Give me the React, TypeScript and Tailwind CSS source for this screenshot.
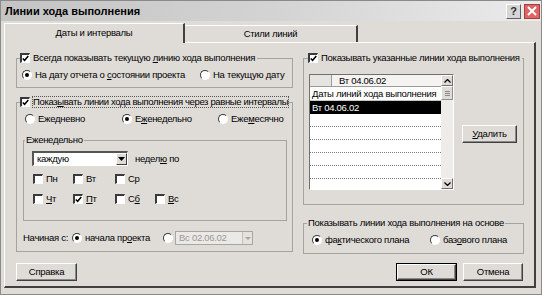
import React from "react";

const Check = ({ checked = false }: { checked?: boolean }) => (
  <span className="flex h-[10px] w-[10px] shrink-0 items-center justify-center border-t-2 border-l-2 border-r border-b border-t-[#3a3a3a] border-l-[#3a3a3a] border-r-white border-b-white bg-white">
    {checked && (
      <svg width="7" height="7" viewBox="0 0 7 7">
        <path d="M0.8 3.4 L2.6 5.3 L6.3 1" stroke="#000" strokeWidth="1.5" fill="none" />
      </svg>
    )}
  </span>
);

const Radio = ({ on = false }: { on?: boolean }) => (
  <span className="flex h-[10px] w-[10px] shrink-0 items-center justify-center rounded-full border-[1.5px] border-t-[#3a3a3a] border-l-[#3a3a3a] border-r-white border-b-white bg-white">
    {on && <span className="h-[4px] w-[4px] rounded-full bg-black" />}
  </span>
);

const Btn = ({ children, w, def = false }: { children: React.ReactNode; w: string; def?: boolean }) => (
  <div className={`${w} h-[18px] ${def ? "border border-black" : ""}`}>
    <div className="flex h-full w-full items-center justify-center border border-t-white border-l-white border-r-[#404040] border-b-[#404040] shadow-[inset_-1px_-1px_0_#8a8a8a]">
      {children}
    </div>
  </div>
);

const Arrow = ({ up = false }: { up?: boolean }) => (
  <svg width="7" height="4" viewBox="0 0 7 4">
    <path d={up ? "M0.5 3.5 L3.5 0.5 L6.5 3.5" : "M0.5 0.5 L3.5 3.5 L6.5 0.5"} stroke="#000" strokeWidth="1.3" fill="none" />
  </svg>
);

export default function App() {
  return (
    <div className="h-[295px] w-[542px] overflow-hidden whitespace-nowrap border border-[#8a8a8a] bg-[#dfdcd8] font-['Liberation_Sans',Arial,sans-serif] text-[9.5px] leading-none tracking-[-0.28px] text-black">
      {/* title bar */}
      <div className="flex h-[20px] items-center bg-gradient-to-r from-[#c4c4c4] via-[#d3d3d3] to-[#ebebeb] pl-[4px] pr-[1px]">
        <span className="text-[11px] font-bold tracking-[0px]">Линии хода выполнения</span>
        <div className="ml-auto flex gap-[3px]">
          <div className="flex h-[15px] w-[15px] items-center justify-center border border-t-white border-l-white border-r-[#606060] border-b-[#606060] bg-[#d6d6d6] text-[11px] font-bold tracking-[0px] text-[#303030]">
            ?
          </div>
          <div className="flex h-[15px] w-[16px] items-center justify-center border border-[#a04040] bg-[#e06464]">
            <svg width="10" height="10" viewBox="0 0 10 10">
              <path d="M1 1 L9 9 M9 1 L1 9" stroke="#fff" strokeWidth="2" />
            </svg>
          </div>
        </div>
      </div>

      <div className="pl-[3px] pr-[5px]">
        {/* tabs */}
        <div className="flex h-[21px] items-end">
          <div className="relative -mb-px flex h-[20px] w-[181px] items-center justify-center border-l border-t border-r-2 border-l-white border-t-white border-r-[#404040] bg-[#dfdcd8] pb-[2px]">
            Даты и интервалы
          </div>
          <div className="flex h-[17px] w-[173px] items-center justify-center border-t border-r-2 border-t-white border-r-[#404040]">
            Стили линий
          </div>
        </div>

        {/* panel */}
        <div className="flex h-[246px] flex-col border-l border-t border-r-2 border-b-2 border-l-white border-t-white border-r-[#404040] border-b-[#404040]">
          <div className="flex pl-[11px] pt-[9px]">
            {/* left column */}
            <div className="w-[277px]">
              <fieldset className="border border-[#a5a3a0] p-0 pb-[6px]">
                <legend className="ml-[3px]">
                  <span className="flex h-[12px] items-center gap-[3px] pr-[2px]">
                    <Check checked />
                    <span>Всегда показывать текущую <u>л</u>инию хода выполнения</span>
                  </span>
                </legend>
                <div className="mt-[5px] flex h-[12px] items-center pl-[5px]">
                  <div className="flex w-[178px] items-center gap-[3px]">
                    <Radio on />
                    <span>На дату отчета о <u>с</u>остоянии проекта</span>
                  </div>
                  <div className="flex items-center gap-[3px]">
                    <Radio />
                    <span>На текущую дату</span>
                  </div>
                </div>
              </fieldset>

              <fieldset className="mt-[8px] border border-[#a5a3a0] p-0 pb-[6px]">
                <legend className="ml-[3px]">
                  <span className="flex h-[12px] items-center gap-[3px]">
                    <Check checked />
                    <span className="tracking-[-0.36px] outline-1 outline-dotted outline-[#555]">Показ<u>ы</u>вать линии хода выполнения через равные интервалы</span>
                  </span>
                </legend>
                <div className="mt-[5px] flex h-[12px] items-center pl-[8px]">
                  <div className="flex w-[97px] items-center gap-[3px]">
                    <Radio />
                    <span>Еже<u>д</u>невно</span>
                  </div>
                  <div className="flex w-[96px] items-center gap-[3px]">
                    <Radio on />
                    <span>Е<u>ж</u>енедельно</span>
                  </div>
                  <div className="flex items-center gap-[3px]">
                    <Radio />
                    <span>Еже<u>м</u>есячно</span>
                  </div>
                </div>

                <fieldset className="ml-[6px] mr-[5px] mt-[9px] border border-[#a5a3a0] p-0 pb-[15px]">
                  <legend className="ml-[1px] flex h-[12px] items-center px-[1px]">Еженедельно</legend>
                  <div className="ml-[8px] mt-[5px] flex items-center gap-[7px]">
                    <div className="flex h-[15px] w-[96px] border-t-2 border-l-2 border-r border-b border-t-[#555] border-l-[#555] border-r-white border-b-white bg-white">
                      <span className="flex flex-1 items-center pl-[3px]">каждую</span>
                      <span className="flex w-[11px] items-center justify-center border border-t-white border-l-white border-r-[#404040] border-b-[#404040] bg-[#dfdcd8]">
                        <svg width="7" height="4" viewBox="0 0 7 4"><path d="M0 0 H7 L3.5 4 Z" fill="#000" /></svg>
                      </span>
                    </div>
                    <span>недел<u>ю</u> по</span>
                  </div>
                  <div className="ml-[9px] mt-[7px] flex h-[12px] items-center">
                    <div className="flex w-[40px] items-center gap-[3px]"><Check /><span>Пн</span></div>
                    <div className="flex w-[42px] items-center gap-[3px]"><Check /><span>Вт</span></div>
                    <div className="flex items-center gap-[3px]"><Check /><span>Ср</span></div>
                  </div>
                  <div className="ml-[9px] mt-[8px] flex h-[12px] items-center">
                    <div className="flex w-[40px] items-center gap-[3px]"><Check /><span><u>Ч</u>т</span></div>
                    <div className="flex w-[42px] items-center gap-[3px]"><Check checked /><span><u>П</u>т</span></div>
                    <div className="flex w-[40px] items-center gap-[3px]"><Check /><span>С<u>б</u></span></div>
                    <div className="flex items-center gap-[3px]"><Check /><span><u>В</u>с</span></div>
                  </div>
                </fieldset>

                <div className="ml-[6px] mt-[10px] flex h-[14px] items-center">
                  <span className="w-[49px]">Начиная с:</span>
                  <div className="flex w-[91px] items-center gap-[3px]">
                    <Radio on />
                    <span>начала пр<u>о</u>екта</span>
                  </div>
                  <Radio />
                  <div className="ml-[2px] flex h-[14px] w-[78px] border border-[#a8a6a3] bg-[#ebe9e6]">
                    <span className="flex flex-1 items-center pl-[3px] text-[#9a9896]">Вс 02.06.02</span>
                    <span className="flex w-[10px] items-center justify-center border-l border-[#c4c2bf] bg-[#e4e2df]">
                      <svg width="6" height="3" viewBox="0 0 6 3"><path d="M0 0 H6 L3 3 Z" fill="#a8a6a3" /></svg>
                    </span>
                  </div>
                </div>
              </fieldset>
            </div>

            {/* right column */}
            <div className="ml-[10px] w-[221px]">
              <fieldset className="border border-[#a5a3a0] p-0 pb-[14px]">
                <legend className="ml-[4px]">
                  <span className="flex h-[12px] items-center gap-[3px] pr-[2px]">
                    <Check checked />
                    <span>Показывать указанные линии хода выполнения</span>
                  </span>
                </legend>
                <div className="ml-[5px] mt-[10px] flex items-start">
                  <div className="flex h-[116px] w-[145px] overflow-hidden border border-t-[#707070] border-l-[#707070] border-r-white border-b-white bg-white">
                    <div className="flex flex-1 flex-col">
                      <div className="flex h-[12px] shrink-0 border-b border-[#9c9a98] bg-[#f4f3f1]">
                        <div className="w-[22px] border-r border-[#9c9a98] bg-[#e6e4e1]" />
                        <div className="flex items-center pl-[7px]">Вт 04.06.02</div>
                      </div>
                      <div className="flex h-[14px] shrink-0 items-center border-b border-[#c8c6c4] pl-[2px]">Даты линий хода выполнения</div>
                      <div className="flex h-[13px] shrink-0 items-center bg-black pl-[2px] text-white">Вт 04.06.02</div>
                      {[0, 1, 2, 3, 4, 5].map((i) => (
                        <div key={i} className="h-[13px] shrink-0 border-b border-dotted border-[#7a7a7a]" />
                      ))}
                    </div>
                    <div className="flex w-[12px] flex-col bg-[#eeece9]">
                      <div className="flex h-[11px] items-center justify-center border border-t-white border-l-white border-r-[#707070] border-b-[#707070] bg-[#dfdcd8]">
                        <Arrow up />
                      </div>
                      <div className="flex h-[14px] flex-col items-center justify-center gap-[1px] border border-t-white border-l-white border-r-[#909090] border-b-[#909090] bg-[#dfdcd8]">
                        <span className="h-px w-[5px] bg-[#8a8a8a]" />
                        <span className="h-px w-[5px] bg-[#8a8a8a]" />
                        <span className="h-px w-[5px] bg-[#8a8a8a]" />
                      </div>
                      <div className="flex-1" />
                      <div className="flex h-[11px] items-center justify-center border border-t-white border-l-white border-r-[#707070] border-b-[#707070] bg-[#dfdcd8]">
                        <Arrow />
                      </div>
                    </div>
                  </div>
                  <div className="ml-[8px] mt-[51px]">
                    <Btn w="w-[55px]">
                      <span><u>У</u>далить</span>
                    </Btn>
                  </div>
                </div>
              </fieldset>

              <fieldset className="mt-[12px] border border-[#a5a3a0] p-0 pb-[7px]">
                <legend className="ml-[3px] flex h-[12px] items-center px-[1px]">Показывать линии хода выполнения на основе</legend>
                <div className="ml-[8px] mt-[5px] flex h-[12px] items-center">
                  <div className="flex w-[118px] items-center gap-[3px]">
                    <Radio on />
                    <span>фа<u>к</u>тического плана</span>
                  </div>
                  <div className="flex items-center gap-[3px]">
                    <Radio />
                    <span>баз<u>о</u>вого плана</span>
                  </div>
                </div>
              </fieldset>
            </div>
          </div>

          {/* buttons */}
          <div className="mt-auto flex items-center pb-[5px] pl-[11px] pr-[11px]">
            <Btn w="w-[61px]">Справка</Btn>
            <div className="flex-1" />
            <Btn w="w-[61px]" def>
              ОК
            </Btn>
            <div className="ml-[6px]">
              <Btn w="w-[60px]">Отмена</Btn>
            </div>
          </div>
        </div>
      </div>
    </div>
  );
}
